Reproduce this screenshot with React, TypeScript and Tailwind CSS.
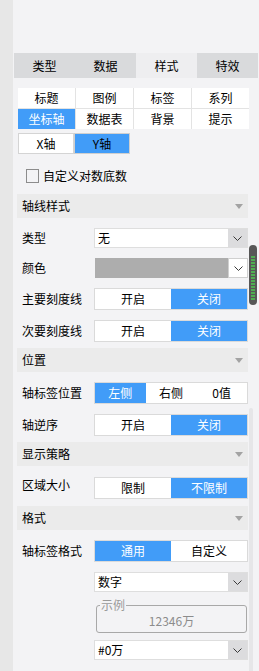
import React from "react";

const Chevron = () => (
  <svg width="9" height="5" viewBox="0 0 9 5">
    <path d="M0.5 0.5 L4.5 4.5 L8.5 0.5" fill="none" stroke="#3a3a3a" strokeWidth="1" />
  </svg>
);

const Tri = () => (
  <svg width="8" height="5" viewBox="0 0 8 5">
    <path d="M0 0 L8 0 L4 5 Z" fill="#a3a3a3" />
  </svg>
);

function Header({ title, mt }: { title: string; mt: string }) {
  return (
    <div className={`${mt} ml-[4px] w-[231px] h-[24px] bg-[#ebebeb] flex items-center justify-between pl-[5px] pr-[5px]`}>
      <span className="text-[12px] text-black">{title}</span>
      <Tri />
    </div>
  );
}

function Row({ label, mt, children, labelCls = "" }: { label: string; mt: string; children: React.ReactNode; labelCls?: string }) {
  return (
    <div className={`${mt} ml-[4px] w-[231px] flex items-center`}>
      <div className={`w-[77px] pl-[5px] text-[12px] text-black ${labelCls}`}>{label}</div>
      {children}
    </div>
  );
}

function Select({ value }: { value: string }) {
  return (
    <div className="w-[154px] h-[20px] flex bg-white border border-[#dedede]">
      <div className="flex-1 flex items-center pl-[3px] text-[12px] text-black">{value}</div>
      <div className="w-[19px] bg-[#dcdcde] flex items-center justify-center">
        <Chevron />
      </div>
    </div>
  );
}

function Seg({ items, active }: { items: string[]; active: number }) {
  return (
    <div className="w-[154px] h-[22px] flex bg-white border border-[#dadada]">
      {items.map((t, i) => (
        <div
          key={t}
          className={`flex-1 flex items-center justify-center text-[12px] ${i === active ? "bg-[#419cf8] text-white" : "text-black"}`}
        >
          {t}
        </div>
      ))}
    </div>
  );
}

export default function App() {
  const tabs = ["类型", "数据", "样式", "特效"];
  const sub = ["标题", "图例", "标签", "系列", "坐标轴", "数据表", "背景", "提示"];
  return (
    <div className="relative w-[259px] h-[671px] overflow-hidden flex bg-[#f3f3f5] font-['Noto_Sans_CJK_SC',sans-serif]">
      <div className="w-[13px] h-full bg-[#e7e7e7]" />
      <div className="flex-1 flex flex-col">
        <div className="mt-[53px] ml-[1px] w-[244px] h-[25px] flex">
          {tabs.map((t, i) => (
            <div
              key={t}
              className={`flex-1 flex items-center justify-center text-[12px] text-black ${i === 2 ? "bg-[#eeeef0]" : "bg-[#d9dadc]"}`}
            >
              {t}
            </div>
          ))}
        </div>

        <div className="mt-[10px] ml-[5px] w-[231px] grid grid-cols-4 gap-[1px] bg-[#e3e3e3]">
          {sub.map((t, i) => (
            <div
              key={t}
              className={`h-[20px] flex items-center justify-center text-[12px] ${i === 4 ? "bg-[#419cf8] text-white" : "bg-white text-black"}`}
            >
              {t}
            </div>
          ))}
        </div>

        <div className="mt-[4px] ml-[5px] flex">
          <div className="w-[56px] h-[21px] bg-white border border-[#d4d4d4] flex items-center justify-center text-[12px] text-black">
            X轴
          </div>
          <div className="w-[56px] h-[21px] bg-[#419cf8] border border-[#cfcfcf] flex items-center justify-center text-[12px] text-black">
            Y轴
          </div>
        </div>

        <div className="mt-[11px] ml-[13px] h-[22px] flex items-center">
          <div className="w-[13px] h-[14px] border border-[#8c8c8c]" />
          <span className="ml-[4px] text-[12px] text-black">自定义对数底数</span>
        </div>

        <Header title="轴线样式" mt="mt-[7px]" />
        <Row label="类型" mt="mt-[10px]">
          <Select value="无" />
        </Row>
        <Row label="颜色" mt="mt-[10px]">
          <div className="w-[154px] h-[20px] flex">
            <div className="flex-1 bg-[#adadad] ml-[1px]" />
            <div className="w-[20px] bg-white border border-[#d0d0d0] flex items-center justify-center">
              <Chevron />
            </div>
          </div>
        </Row>
        <Row label="主要刻度线" mt="mt-[10px]">
          <Seg items={["开启", "关闭"]} active={1} />
        </Row>
        <Row label="次要刻度线" mt="mt-[10px]">
          <Seg items={["开启", "关闭"]} active={1} />
        </Row>

        <Header title="位置" mt="mt-[6px]" />
        <Row label="轴标签位置" mt="mt-[10px]">
          <Seg items={["左侧", "右侧", "0值"]} active={0} />
        </Row>
        <Row label="轴逆序" mt="mt-[10px]">
          <Seg items={["开启", "关闭"]} active={1} />
        </Row>

        <Header title="显示策略" mt="mt-[6px]" />
        <Row label="区域大小" mt="mt-[10px]" labelCls="pb-[6px]">
          <Seg items={["限制", "不限制"]} active={1} />
        </Row>

        <Header title="格式" mt="mt-[6px]" />
        <Row label="轴标签格式" mt="mt-[10px]">
          <Seg items={["通用", "自定义"]} active={0} />
        </Row>
        <div className="mt-[10px] ml-[81px]">
          <Select value="数字" />
        </div>
        <div className="relative mt-[13px] ml-[83px] w-[151px] h-[28px] border border-[#a8a8a8] rounded-[3px] flex items-center justify-center pt-[4px]">
          <span className="absolute -top-[9px] left-[3px] px-[1px] bg-[#f3f3f5] text-[12px] leading-[16px] text-[#9a9a9a]">示例</span>
          <span className="text-[12px] text-[#8c8c8c]">12346万</span>
        </div>
        <div className="mt-[7px] ml-[81px]">
          <Select value="#0万" />
        </div>
      </div>

      <div className="absolute left-[249px] top-[245px] w-[8px] h-[60px] rounded-full bg-[#575757] flex justify-center">
        <svg width="4" height="46" viewBox="0 0 4 46" className="mt-[11px]">
          {Array.from({ length: 15 }).map((_, i) => (
            <rect key={i} x="0" y={i * 3} width="4" height="2" fill="#4fae52" />
          ))}
        </svg>
      </div>
      <div className="absolute left-[249px] top-[408px] w-[4px] h-[263px] rounded-t-[2px] bg-[#e6e6e8]" />
    </div>
  );
}
